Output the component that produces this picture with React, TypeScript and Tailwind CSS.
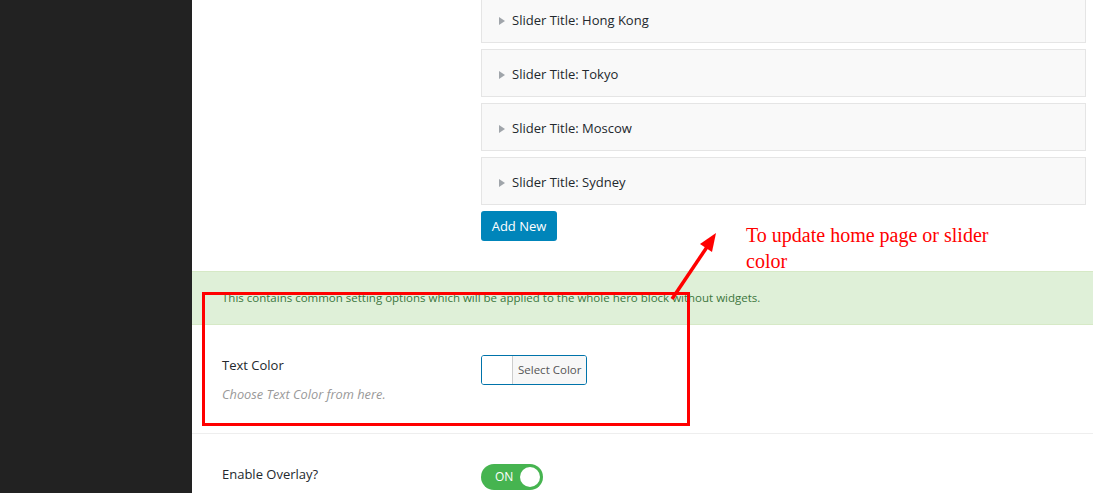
import React from "react";

const sliders = ["Hong Kong", "Tokyo", "Moscow", "Sydney"];

const SliderItem = ({ title }: { title: string }) => (
  <div className="h-[48px] shrink-0 flex items-center pl-[17px] pt-[4px] bg-[#f9f9f9] border border-[#e5e5e5]">
    <span className="w-0 h-0 border-y-[4.5px] border-y-transparent border-l-[6px] border-l-[#a0a5aa] mr-[7px]" />
    <span className="text-[13px] font-medium text-[#23282d]">Slider Title: {title}</span>
  </div>
);

export default function App() {
  return (
    <div
      className="relative flex h-[493px] w-[1093px] overflow-hidden bg-white"
      style={{ fontFamily: '"Open Sans", "Noto Sans", sans-serif' }}
    >
      {/* Admin sidebar */}
      <div className="w-[192px] shrink-0 bg-[#222222]" />

      {/* Main panel */}
      <div className="relative flex-1">
        {/* Slider list */}
        <div className="pl-[289px] pr-[7px] -mt-[5px] flex flex-col gap-[6px]">
          {sliders.map((s) => (
            <SliderItem key={s} title={s} />
          ))}
          <button className="w-[76px] h-[30px] shrink-0 rounded-[3px] bg-[#0085ba] text-white text-[13px] leading-none">
            Add New
          </button>
        </div>

        {/* Notice */}
        <div className="mt-[30px] h-[54px] flex items-center px-[30px] bg-[#dff0d8] border-y border-[#d6e9c6]">
          <p className="text-[11.5px] text-[#3c763d]">
            This contains common setting options which will be applied to the whole hero block without widgets.
          </p>
        </div>

        {/* Text color row */}
        <div className="flex px-[30px] pt-[30px] pb-[29px] border-b border-[#eeeeee]">
          <div className="w-[259px]">
            <div className="text-[13px] leading-[20px] font-medium text-[#23282d]">Text Color</div>
            <div className="mt-[9px] text-[12.8px] leading-[20px] italic text-[#999999]">
              Choose Text Color from here.
            </div>
          </div>
          <div className="flex h-[30px] rounded-[3px] border border-[#0073aa] overflow-hidden">
            <div className="w-[31px] bg-white border-r border-[#cccccc]" />
            <div className="flex items-center px-[5px] bg-[#f7f7f7] text-[11.5px] text-[#555555]">Select Color</div>
          </div>
        </div>

        {/* Overlay row */}
        <div className="flex px-[30px] pt-[30px]">
          <div className="w-[259px]">
            <div className="text-[13px] leading-[20px] font-medium text-[#23282d]">Enable Overlay?</div>
            <div className="mt-[6px] text-[12.8px] leading-[20px] italic text-[#999999]">
              Select Preferred overlay color.
            </div>
          </div>
          <div className="flex items-center justify-between w-[62px] h-[26px] rounded-full bg-[#46b450] pl-[14px] pr-[3px]">
            <span className="text-[12px] text-white">ON</span>
            <span className="w-[20px] h-[20px] rounded-full bg-white" />
          </div>
        </div>

        {/* Annotation box */}
        <div className="absolute left-[10px] top-[292px] w-[488px] h-[134px] border-[3.5px] border-[#ff0000]" />
        <div
          className="absolute left-[554px] top-[222px] w-[270px] text-[20px] leading-[26px] text-[#ff0000]"
          style={{ fontFamily: '"Liberation Serif", serif' }}
        >
          To update home page or slider color
        </div>
      </div>

      {/* Arrow */}
      <svg className="absolute inset-0 pointer-events-none" width="1093" height="493">
        <line x1="672" y1="299" x2="707" y2="247" stroke="#ff0000" strokeWidth="3.5" />
        <polygon points="716,233 700,244 712,252" fill="#ff0000" />
      </svg>
    </div>
  );
}
